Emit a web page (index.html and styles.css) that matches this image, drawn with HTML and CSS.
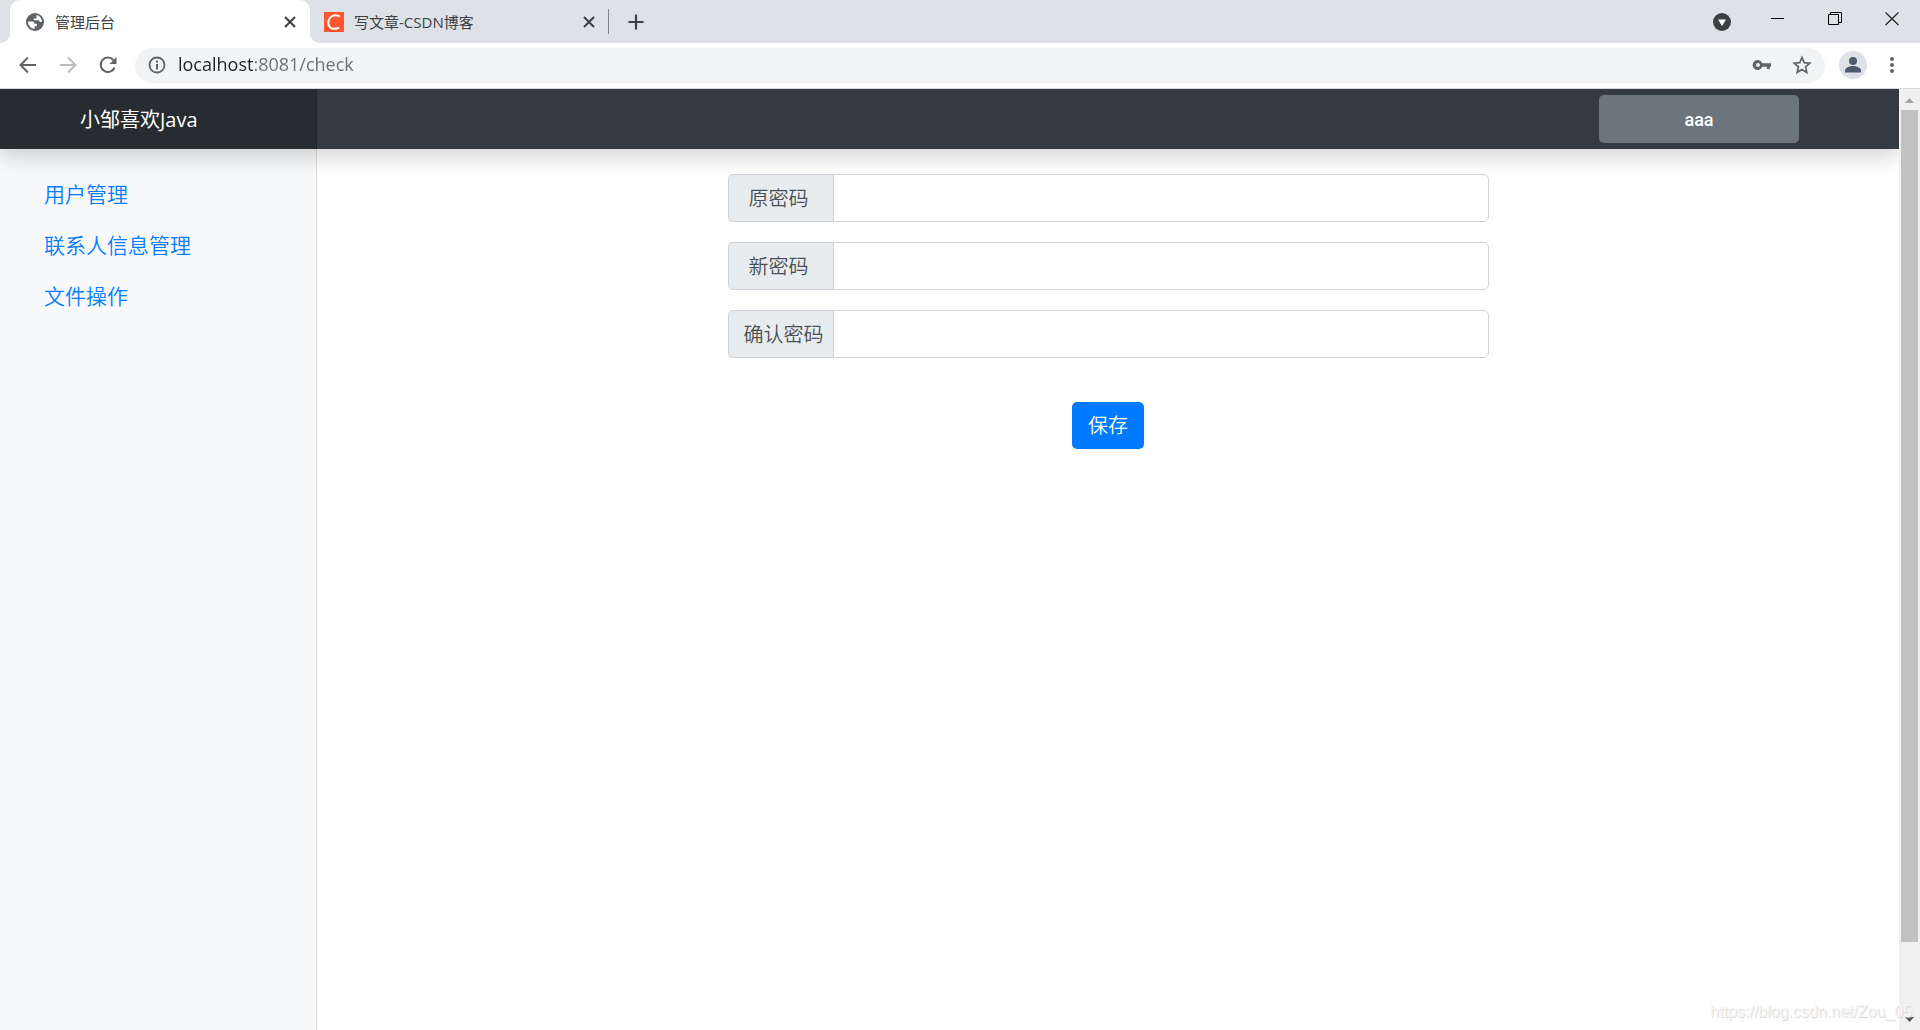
FILE: index.html
```html
<!DOCTYPE html>
<html lang="zh-CN">
<head>
<meta charset="utf-8">
<meta name="viewport" content="width=device-width, initial-scale=1">
<title>管理后台</title>
<link rel="stylesheet" href="styles.css">
</head>
<body>
<div class="browser">
  <div class="tabstrip">
    <div class="tab tab-active">
      <svg class="icon-20" viewBox="0 0 20 20" aria-hidden="true">
        <circle cx="10" cy="10" r="9" fill="#5f6368"/>
        <path d="M11.500 3.100a7 7 0 0 1 5.400 6.300c-1 .9-2.200.5-2.700-.4-.4-.8-1.400-.7-2-.7H8.800V6.600h1.700c.8 0 1-.5 1-1.200z" fill="#fff"/>
        <path d="M3 9.400h4.200c1.600 0 2.300 1 2.300 2.300h2.300v2.600H9.600v2.600A7 7 0 0 1 3 9.400z" fill="#fff"/>
      </svg>
      <span class="tab-title">管理后台</span>
      <button class="icon-button" type="button" aria-label="关闭标签页"><svg class="icon-14" viewBox="0 0 14 14"><path d="M2 2l10 10M12 2L2 12" stroke="#3c4043" stroke-width="2" fill="none"/></svg></button>
    </div>
    <div class="tab">
      <svg class="icon-20" viewBox="0 0 20 20" aria-hidden="true">
        <rect width="20" height="20" fill="#fc5531"/>
        <path d="M15.700 4.700C13.500 3.300 10 3 7.500 4.500 3.800 6.800 3.200 12.500 6 15.200c2.300 2.200 6.500 2 9 .4" fill="none" stroke="#fff" stroke-width="2"/>
      </svg>
      <span class="tab-title">写文章-CSDN博客</span>
      <button class="icon-button" type="button" aria-label="关闭标签页"><svg class="icon-14" viewBox="0 0 14 14"><path d="M2 2l10 10M12 2L2 12" stroke="#3c4043" stroke-width="2" fill="none"/></svg></button>
    </div>
    <span class="tab-divider"></span>
    <button class="icon-button new-tab" type="button" aria-label="新标签页"><svg class="icon-16" viewBox="0 0 16 16"><path d="M8 .5v15M.5 8h15" stroke="#3c4043" stroke-width="2.200" fill="none"/></svg></button>
    <div class="window-controls">
      <button class="icon-button tab-search" type="button" aria-label="搜索标签页"><svg class="icon-18" viewBox="0 0 18 18"><circle cx="9" cy="9" r="9" fill="#3c4043"/><path d="M5 6.500h8L9 13z" fill="#fff"/></svg></button>
      <button class="icon-button window-button" type="button" aria-label="最小化"><svg class="icon-14" viewBox="0 0 14 14"><path d="M0 6.500h13" stroke="#000" fill="none"/></svg></button>
      <button class="icon-button window-button" type="button" aria-label="还原"><svg class="icon-14" viewBox="0 0 14 14"><path d="M.5 2.500h10v10H.5zM2.500 2.500v-2h11v10h-3" stroke="#000" fill="none"/></svg></button>
      <button class="icon-button window-button" type="button" aria-label="关闭"><svg class="icon-14" viewBox="0 0 14 14"><path d="M.5 .5l13 12.500M13.500 .5L.5 13" stroke="#222" stroke-width="1.200" fill="none"/></svg></button>
    </div>
  </div>

  <div class="toolbar">
    <button class="icon-button" type="button" aria-label="后退"><svg class="icon-18" viewBox="0 0 18 18"><path d="M17 9H2M9 1.500L1.500 9 9 16.500" stroke="#5f6368" stroke-width="2" fill="none"/></svg></button>
    <button class="icon-button" type="button" aria-label="前进"><svg class="icon-18" viewBox="0 0 18 18"><path d="M1 9h15M9 1.500L16.500 9 9 16.500" stroke="#babcbe" stroke-width="2" fill="none"/></svg></button>
    <button class="icon-button" type="button" aria-label="重新加载"><svg class="icon-18" viewBox="0 0 18 18"><path d="M15.600 11.500A7.200 7.200 0 1 1 14.300 4" stroke="#5f6368" stroke-width="2" fill="none"/><path d="M17.500 1v7h-7z" fill="#5f6368"/></svg></button>
    <div class="address-bar">
      <svg class="icon-18" viewBox="0 0 18 18" aria-hidden="true"><circle cx="9" cy="9" r="7.500" stroke="#5f6368" stroke-width="1.800" fill="none"/><path d="M8 4.500h2v2H8zM8 8h2v5.500H8z" fill="#5f6368"/></svg>
      <input class="address-input" type="text" aria-label="地址" value="localhost:8081/check">
      <button class="icon-button" type="button" aria-label="密码"><svg class="icon-20" viewBox="0 0 20 20"><path fill-rule="evenodd" d="M10.300 8.200H19v3.600h-1.200V14h-3v-2.200h-4.500a5 5 0 1 1 0-3.600zM6 8a2 2 0 1 0 0 4 2 2 0 0 0 0-4z" fill="#5f6368"/></svg></button>
      <button class="icon-button" type="button" aria-label="收藏"><svg class="icon-20" viewBox="0 0 20 20"><path d="M10 2.500l2.200 5.200 5.600.5-4.200 3.700 1.200 5.500-4.800-2.900-4.800 2.900 1.200-5.500-4.200-3.700 5.600-.5z" stroke="#5f6368" stroke-width="1.700" fill="none"/></svg></button>
    </div>
    <button class="icon-button" type="button" aria-label="用户"><svg class="icon-28" viewBox="0 0 28 28"><circle cx="14" cy="14" r="14" fill="#dee1e6"/><circle cx="14" cy="10" r="4" fill="#4d5a70"/><path d="M6 21.500v-2c0-3 4.500-4.500 8-4.500s8 1.500 8 4.500v2z" fill="#4d5a70"/></svg></button>
    <button class="icon-button menu-button" type="button" aria-label="菜单"><svg class="icon-18" viewBox="0 0 18 18"><g fill="#5f6368"><circle cx="9" cy="3" r="2"/><circle cx="9" cy="9" r="2"/><circle cx="9" cy="15" r="2"/></g></svg></button>
  </div>

  <div class="viewport">
    <div class="page">
      <header class="navbar">
        <div class="brand-cell"><a class="brand" href="#">小邹喜欢Java</a></div>
        <button class="user-button" type="button">aaa</button>
      </header>
      <div class="page-body">
        <nav class="sidebar">
          <a class="side-link" href="#">用户管理</a>
          <a class="side-link" href="#">联系人信息管理</a>
          <a class="side-link" href="#">文件操作</a>
        </nav>
        <main class="content">
          <form class="password-form">
            <div class="input-group">
              <label class="input-label" for="old-password">原密码</label>
              <input class="input-field" id="old-password" type="password" autocomplete="off">
            </div>
            <div class="input-group">
              <label class="input-label" for="new-password">新密码</label>
              <input class="input-field" id="new-password" type="password" autocomplete="off">
            </div>
            <div class="input-group">
              <label class="input-label input-label-long" for="confirm-password">确认密码</label>
              <input class="input-field" id="confirm-password" type="password" autocomplete="off">
            </div>
            <button class="save-button" type="button">保存</button>
          </form>
        </main>
      </div>
    </div>
    <div class="scrollbar" aria-hidden="true">
      <svg class="scroll-arrow" viewBox="0 0 21 21"><path d="M6 14h9l-4.500-5z" fill="#a3a3a3"/></svg>
      <div class="scroll-track"><div class="scroll-thumb"></div></div>
      <svg class="scroll-arrow" viewBox="0 0 21 21"><path d="M6 8h9l-4.500 5z" fill="#505050"/></svg>
    </div>
  </div>
  <span class="watermark">https://blog.csdn.net/Zou_05</span>
</div>
</body>
</html>
```
FILE: styles.css
```css
* {
  box-sizing: border-box;
}

body {
  margin: 0;
  background: #fff;
  color: #212529;
  font-family: "Open Sans", "Noto Sans CJK SC", sans-serif;
  font-size: 20px;
  font-weight: 350;
  line-height: 30px;
}

button,
input {
  margin: 0;
  font: inherit;
}

a {
  text-decoration: none;
}

svg {
  display: block;
  flex: none;
}

.icon-14 { width: 14px; height: 14px; }
.icon-16 { width: 16px; height: 16px; }
.icon-18 { width: 18px; height: 18px; }
.icon-20 { width: 20px; height: 20px; }
.icon-28 { width: 28px; height: 28px; }

.icon-button {
  display: flex;
  flex: none;
  align-items: center;
  justify-content: center;
  padding: 0;
  border: 0;
  background: none;
}

.browser {
  position: relative;
  display: flex;
  flex-direction: column;
  min-height: 100vh;
}

/* Tab strip */
.tabstrip {
  display: flex;
  align-items: center;
  height: 43px;
  padding-left: 10px;
  background: #dee1e6;
}

.tab {
  display: flex;
  align-items: center;
  gap: 10px;
  width: 298px;
  height: 43px;
  padding: 0 12px 0 14px;
  color: #3c4043;
  font-size: 15px;
  line-height: 22px;
}

.tab-active {
  position: relative;
  width: 300px;
  padding: 0 13px 0 15px;
  border-radius: 10px 10px 0 0;
  background: #fff;
}

.tab-active::before,
.tab-active::after {
  content: "";
  position: absolute;
  bottom: 0;
  width: 10px;
  height: 10px;
}

.tab-active::before {
  right: 100%;
  background: radial-gradient(circle at 0 0, #dee1e6 10px, #fff 10px);
}

.tab-active::after {
  left: 100%;
  background: radial-gradient(circle at 100% 0, #dee1e6 10px, #fff 10px);
}

.tab-title {
  flex: 1;
  font-weight: 400;
}

.tab-divider {
  width: 1px;
  height: 25px;
  background: #808387;
}

.new-tab {
  margin-left: 19px;
}

.window-controls {
  display: flex;
  align-items: center;
  margin-left: auto;
}

.window-button {
  width: 57px;
  height: 37px;
  padding-bottom: 6px;
}

.tab-search {
  margin-right: 18px;
}

/* Toolbar */
.toolbar {
  display: flex;
  align-items: center;
  gap: 22px;
  height: 46px;
  padding: 0 19px 1px;
  border-bottom: 1px solid #d5d7da;
}

.address-bar {
  display: flex;
  flex: 1;
  align-items: center;
  gap: 20px;
  height: 35px;
  margin-left: -4px;
  margin-right: -8px;
  padding: 0 13px;
  border-radius: 18px;
  background: #f1f3f4;
}

.address-input {
  flex: 1;
  min-width: 0;
  height: 35px;
  margin-left: -8px;
  padding: 0 0 2px;
  border: 0;
  outline: 0;
  background: linear-gradient(90deg, #202124 75px, #6b6f74 75px);
  -webkit-background-clip: text;
  background-clip: text;
  -webkit-text-fill-color: transparent;
  font-size: 18px;
  font-weight: 400;
}

.menu-button {
  margin-left: -6px;
}

/* Page viewport */
.viewport {
  display: flex;
  flex: 1;
}

.page {
  display: flex;
  flex: 1;
  flex-direction: column;
  overflow: hidden;
}

.navbar {
  position: relative;
  z-index: 1;
  display: grid;
  grid-template-columns: 16.7% 1fr;
  height: 60px;
  background: #353a42;
  box-shadow: 0 10px 20px rgba(0, 0, 0, 0.15);
}

.brand-cell {
  padding: 16px 0 14px 80px;
  border-right: 1px solid #202327;
  background: #272c30;
}

.brand {
  display: block;
  color: #fff;
  font-weight: 400;
}

.user-button {
  align-self: center;
  justify-self: end;
  width: 200px;
  height: 48px;
  margin-right: 100px;
  padding: 2px 0 0;
  border: 0;
  border-radius: 5px;
  background: #6c757d;
  color: #fff;
  font-family: Roboto, sans-serif;
  font-size: 18px;
  font-weight: 500;
}

.page-body {
  display: flex;
  flex: 1;
}

.sidebar {
  display: flex;
  flex: none;
  flex-direction: column;
  gap: 21px;
  width: 16.7%;
  padding: 30px 44px;
  border-right: 1px solid #dcdcdd;
  background: #f8f9fb;
}

.side-link {
  color: #007bff;
  font-size: 21px;
}

.content {
  display: flex;
  flex: 1;
  align-items: flex-start;
  justify-content: center;
  padding-top: 25px;
}

.password-form {
  display: flex;
  flex-direction: column;
  gap: 20px;
  width: 50%;
  padding: 0 15px;
}

.input-group {
  display: flex;
  height: 48px;
}

.input-label {
  width: 105px;
  padding: 9px 0 7px 20px;
  border: 1px solid #ced4da;
  border-right: 0;
  border-radius: 5px 0 0 5px;
  background: #e9ecef;
  color: #495057;
}

.input-label-long {
  padding-left: 15px;
}

.input-field {
  flex: 1;
  min-width: 0;
  padding: 8px 15px;
  border: 1px solid #ced4da;
  border-radius: 0 5px 5px 0;
  outline: 0;
  background: #fff;
}

.save-button {
  align-self: center;
  height: 47px;
  margin-top: 24px;
  padding: 0 16px;
  border: 0;
  border-radius: 5px;
  background: #007bff;
  color: #fff;
}

/* Scrollbar */
.scrollbar {
  display: flex;
  flex: none;
  flex-direction: column;
  width: 21px;
  background: #f0f0f0;
}

.scroll-arrow {
  width: 21px;
  height: 21px;
}

.scroll-track {
  flex: 1;
  padding: 0 2px;
}

.scroll-thumb {
  height: 92.6%;
  background: #c1c1c1;
}

.watermark {
  position: absolute;
  right: 8px;
  bottom: 3px;
  color: #f7f7f7;
  font-family: "Liberation Sans", sans-serif;
  font-size: 16px;
  font-weight: 400;
  text-shadow: 1px 1px 1px #d4d4d4;
  pointer-events: none;
}
```
